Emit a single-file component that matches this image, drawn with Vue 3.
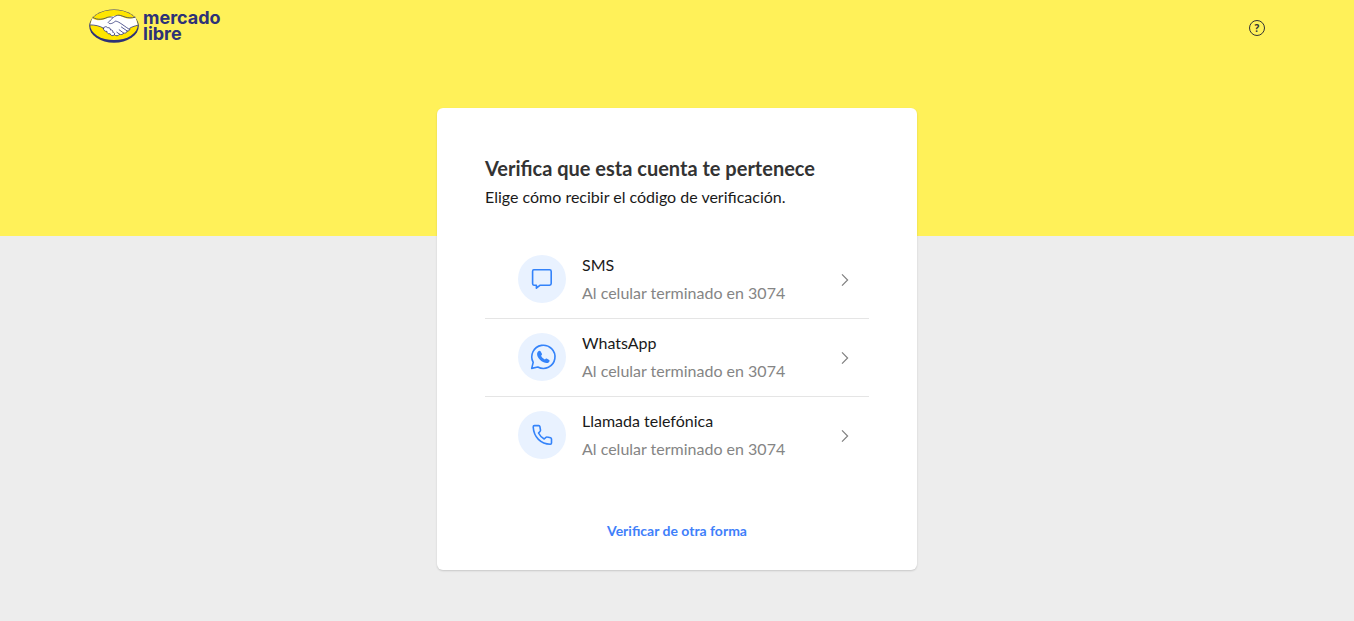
<script setup>
const options = [
  { id: 'sms', name: 'SMS', detail: 'Al celular terminado en 3074' },
  { id: 'whatsapp', name: 'WhatsApp', detail: 'Al celular terminado en 3074' },
  { id: 'call', name: 'Llamada telefónica', detail: 'Al celular terminado en 3074' },
]
</script>

<template>
  <div class="page">
    <header class="header">
      <a class="brand" href="#" aria-label="Mercado Libre">
        <svg class="brand-mark" viewBox="0 0 50 35" aria-hidden="true">
          <ellipse cx="25" cy="18.1" rx="24.8" ry="16.6" fill="#2d3277" />
          <ellipse cx="25" cy="17" rx="23.8" ry="15.1" fill="#ffe600" />
          <path
            d="M3.2 10.2C8 13.2 13.5 12.5 18 10.2L24 8L29 7.4C34 8 37 12.5 46.5 9.6L48.8 17.2C45 18.2 42.5 19 40.8 20.2C41.2 22.2 39.8 23.3 38.2 23C37.6 25 36 25.5 34.6 25C33.6 27 31.8 27 30.6 26.2C29.5 28 26.8 28.4 25.4 26.8C23.8 28.4 21.4 27.6 21.2 25.8C19 26.2 17.8 24.8 18 23.4C15.8 23.6 14.2 21.8 14.8 20.2C10.8 17.8 6 17 1.3 16.9Z"
            fill="#fff"
          />
          <g fill="none" stroke="#2d3277" stroke-width="0.8" stroke-linecap="round" stroke-linejoin="round">
            <path d="M4 9.5C8.5 12.4 14 11.4 18.3 9.4C20.2 8.8 21.8 9 23.5 9.2" />
            <path d="M46 9.3C38 11.4 34.5 7.7 30 7.2C26 6.9 22 11.5 19.2 14.5C20.8 16.9 24.5 15 26.2 13.2C29 13 32 15.7 40.3 21.4" />
            <path d="M1.3 16.9C6 17 10.8 17.8 14.5 20.2" />
            <path d="M48.8 17.2C45 18.2 42.5 19 40.8 20.2" />
            <path d="M14.5 20.2C15.2 18.4 17.5 18 18.6 19.8C20.6 19.2 21.8 20.7 21.4 22C23.4 21.6 24.2 23 23.6 24.2C25.2 24.3 26.2 25.6 25.4 26.8C23.8 28.4 21.4 27.6 21.2 25.8C19 26.2 17.8 24.8 18 23.4C15.8 23.6 14 22 14.5 20.2Z" />
            <path d="M25.4 26.8C26.8 28.4 29.5 28 30.6 26.2L27.8 24.2M30.6 26.2C32 27.1 34.1 26.6 34.6 25L30.2 21.8M34.6 25C36.4 25.5 37.9 24.8 38.2 23L32.4 19M38.2 23C39.8 23.3 41.2 22.2 40.8 20.8" />
          </g>
        </svg>
        <span class="brand-name">mercado<br />libre</span>
      </a>
      <button class="help" type="button" aria-label="Ayuda">?</button>
    </header>

    <main class="card">
      <h1>Verifica que esta cuenta te pertenece</h1>
      <p class="subtitle">Elige cómo recibir el código de verificación.</p>

      <ul class="options">
        <li v-for="option in options" :key="option.id">
          <button class="option" type="button">
            <span class="badge">
              <svg v-if="option.id === 'sms'" width="48" height="48" viewBox="0 0 48 48" aria-hidden="true">
                <path d="M15.8 14.8H31.6Q33.2 14.8 33.2 16.4V28.6Q33.2 30.2 31.6 30.2H22.2L18.4 33.2V30.2H15.8Q14.6 30.2 14.6 28.6V16.4Q14.6 14.8 15.8 14.8Z" />
              </svg>
              <svg v-else-if="option.id === 'whatsapp'" width="48" height="48" viewBox="0 0 48 48" aria-hidden="true">
                <path d="M13.7 35.4L15.2 29.4A11.6 11.6 0 1 1 19.8 34Z" />
                <path class="solid" d="M20.1 18.6C20.8 17.7 22.1 17.6 22.7 18.5L23.9 20.8C24.2 21.5 23.8 22 23.1 22.8C23.8 24.3 25.4 25.9 26.9 26.5C27.7 25.6 28.1 25.3 28.7 25.6L31.2 26.9C31.9 27.4 31.5 28.6 30.9 29.2C29.7 30.3 27.9 30.4 25.6 29.3C22.7 28 20.8 25.8 19.6 23.4C18.8 21.4 18.9 19.8 20.1 18.6Z" />
              </svg>
              <svg v-else width="48" height="48" viewBox="0 0 48 48" aria-hidden="true">
                <path d="M16.4 14.6H20.7Q21.7 14.6 21.9 15.6L22.5 19.2Q22.6 20 22 20.5L20.5 22Q22.4 25.8 26.2 28L27.9 26.4Q28.5 25.8 29.2 26L32.5 26.7Q33.5 26.9 33.5 27.9V32.1Q33.5 33.3 32.3 33.3C22.8 33 15.8 26.2 15.2 16Q15.2 14.6 16.4 14.6Z" />
              </svg>
            </span>
            <span class="text">
              <span class="name">{{ option.name }}</span>
              <span class="detail">{{ option.detail }}</span>
            </span>
            <svg class="chevron" width="8" height="14" viewBox="0 0 8 14" aria-hidden="true">
              <path d="M1 2.4L6.6 8L1 13.6" />
            </svg>
          </button>
        </li>
      </ul>

      <a class="other" href="#">Verificar de otra forma</a>
    </main>
  </div>
</template>

<style>
body {
  background: #ededed;
}
</style>

<style scoped>
.page {
  min-height: 100vh;
  box-sizing: border-box;
  padding-bottom: 48px;
  background: linear-gradient(#fff159 236px, #ededed 236px);
  color: #333;
  font-family: Lato, 'Liberation Sans', sans-serif;
}

.header {
  display: flex;
  justify-content: space-between;
  max-width: 1176px;
  height: 108px;
  margin: 0 auto;
  box-sizing: border-box;
  padding-top: 8px;
}

.brand {
  display: flex;
  align-items: center;
  gap: 4px;
  height: 35px;
  color: #2d3277;
  text-decoration: none;
}

.brand-mark {
  width: 50px;
  height: 35px;
}

.brand-name {
  font: 700 18px/16px Inter, 'Liberation Sans', sans-serif;
}

.help {
  width: 16px;
  height: 16px;
  margin-top: 12px;
  padding: 0;
  border: 1px solid #333;
  border-radius: 50%;
  background: none;
  color: #333;
  font: 700 10px/14px 'Open Sans', 'Liberation Sans', sans-serif;
  cursor: pointer;
}

.card {
  max-width: 480px;
  margin: 0 auto;
  box-sizing: border-box;
  padding: 48px 48px 30px;
  border-radius: 6px;
  background: #fff;
  box-shadow: 0 1px 2px rgba(0, 0, 0, 0.16);
}

h1 {
  margin: 0;
  font-size: 20px;
  font-weight: 700;
  line-height: 24px;
}

.subtitle {
  margin: 7px 0 34px;
  color: #1a1a1a;
  font-size: 16px;
  font-weight: 400;
  line-height: 20px;
}

.options {
  margin: 0;
  padding: 0;
  list-style: none;
}

li {
  border-bottom: 1px solid #e5e5e5;
}

li:last-child {
  border-bottom: 0;
}

.option {
  display: flex;
  align-items: center;
  width: 100%;
  padding: 10px 20px 11px 33px;
  border: 0;
  background: none;
  font-family: inherit;
  text-align: left;
  cursor: pointer;
}

.badge {
  display: flex;
  width: 48px;
  height: 48px;
  margin-right: 16px;
  border-radius: 50%;
  background: #e9f2ff;
}

.badge path {
  fill: none;
  stroke: #3483fa;
  stroke-width: 1.6;
  stroke-linejoin: round;
}

.badge .solid {
  fill: #3483fa;
  stroke: none;
}

.text {
  display: flex;
  flex: 1;
  flex-direction: column;
  font-size: 16px;
  font-weight: 400;
  line-height: 28px;
}

.name {
  color: #1a1a1a;
}

.detail {
  color: #858585;
}

.chevron path {
  fill: none;
  stroke: #808080;
  stroke-width: 1.2;
}

.other {
  display: block;
  width: fit-content;
  margin: 48px auto 0;
  color: #3f80fa;
  font-size: 14px;
  font-weight: 700;
  line-height: 18px;
  text-decoration: none;
}
</style>
